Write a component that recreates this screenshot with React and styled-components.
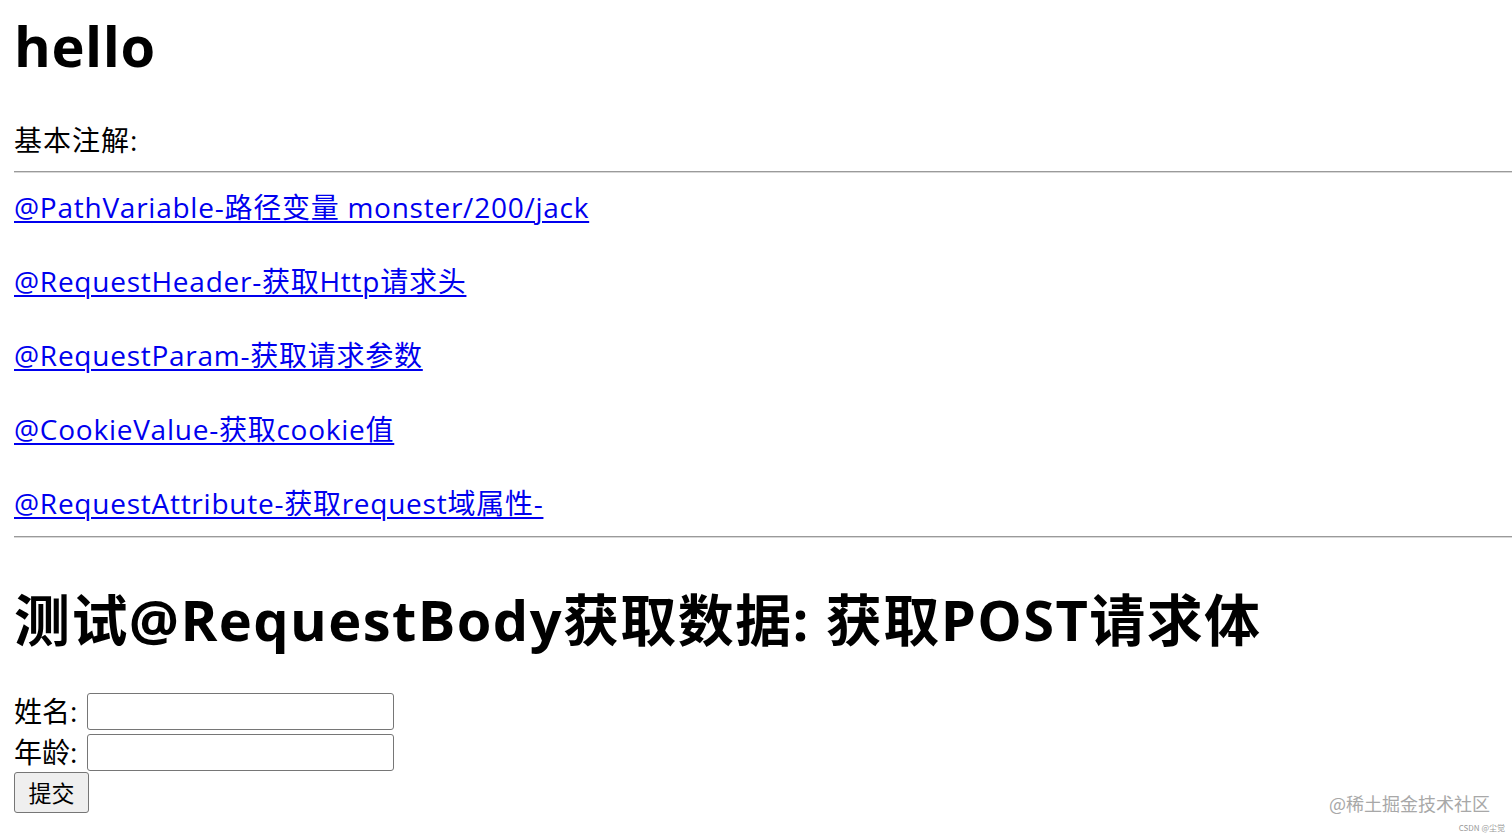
import React from 'react'
import styled, {createGlobalStyle} from 'styled-components'

const GlobalStyle = createGlobalStyle`
  html, body {
    margin: 0;
    padding: 0;
    background: #ffffff;
  }
  body {
    font-family: 'Open Sans', 'Noto Sans CJK SC', sans-serif;
    color: #000000;
    overflow: hidden;
  }
`

const Page = styled.div`
  position: relative;
  width: 1512px;
  height: 838px;
  padding: 0 14px;
  box-sizing: border-box;
  overflow: hidden;
`

const Title = styled.h1`
  margin: ${props => props.top}px 0 0 0;
  font-size: 56px;
  line-height: 74px;
  font-weight: 700;
  letter-spacing: ${props => props.spacing || 0}px;
  white-space: nowrap;
`

const Label = styled.div`
  margin-top: 40px;
  font-size: 28px;
  line-height: 37px;
  letter-spacing: 1px;
`

const Rule = styled.hr`
  margin: ${props => props.top}px -14px 0 0;
  border: none;
  border-top: 1px solid #9a9a9a;
  border-bottom: 1px solid #d8d8d8;
`

const LinkList = styled.div`
  display: flex;
  flex-direction: column;
  gap: 37px;
  margin-top: 16px;
`

const Link = styled.a`
  align-self: flex-start;
  font-size: 28px;
  line-height: 37px;
  letter-spacing: 0.75px;
  color: #0000ee;
  text-decoration: underline;
  text-decoration-thickness: 1.5px;
  text-underline-offset: 3px;
  white-space: nowrap;
  cursor: pointer;
`

const Form = styled.form`
  display: flex;
  flex-direction: column;
  align-items: flex-start;
  margin-top: 37px;
`

const Row = styled.div`
  display: flex;
  align-items: center;
  font-size: 28px;
  line-height: 37px;
  margin-bottom: ${props => props.gap || 0}px;
`

const Input = styled.input`
  width: 307px;
  height: 37px;
  margin-left: 10px;
  box-sizing: border-box;
  border: 1px solid #767676;
  border-radius: 3px;
  font-size: 24px;
  padding: 0 4px;
`

const Submit = styled.button`
  width: 75px;
  height: 41px;
  margin-top: 1px;
  box-sizing: border-box;
  background: #efefef;
  border: 1px solid #767676;
  border-radius: 3px;
  font-family: 'Noto Sans CJK SC', sans-serif;
  font-size: 23px;
  line-height: 1;
  color: #000;
  padding: 0;
`

const Watermark = styled.div`
  position: absolute;
  right: 22px;
  bottom: 22px;
  font-family: 'Noto Sans CJK SC', sans-serif;
  font-size: 18px;
  color: #a8a8a8;
`

const Credit = styled.div`
  position: absolute;
  right: 7px;
  bottom: 5px;
  font-family: 'Noto Sans CJK SC', sans-serif;
  font-size: 8px;
  color: #9a9a9a;
`

const links = [
  '@PathVariable-路径变量 monster/200/jack',
  '@RequestHeader-获取Http请求头',
  '@RequestParam-获取请求参数',
  '@CookieValue-获取cookie值',
  '@RequestAttribute-获取request域属性-',
]

const App = () => {
  return (
    <Page>
      <GlobalStyle />
      <Title top={8} spacing={0.6}>hello</Title>
      <Label>基本注解:</Label>
      <Rule top={12} />
      <LinkList>
        {links.map(text => (
          <Link key={text}>{text}</Link>
        ))}
      </LinkList>
      <Rule top={14} />
      <Title top={44} spacing={1.4}>测试@RequestBody获取数据: 获取POST请求体</Title>
      <Form onSubmit={e => e.preventDefault()}>
        <Row gap={4}>姓名:<Input type="text" /></Row>
        <Row>年龄:<Input type="text" /></Row>
        <Submit type="submit">提交</Submit>
      </Form>
      <Watermark>@稀土掘金技术社区</Watermark>
      <Credit>CSDN @尘觉</Credit>
    </Page>
  )
}

export default App
